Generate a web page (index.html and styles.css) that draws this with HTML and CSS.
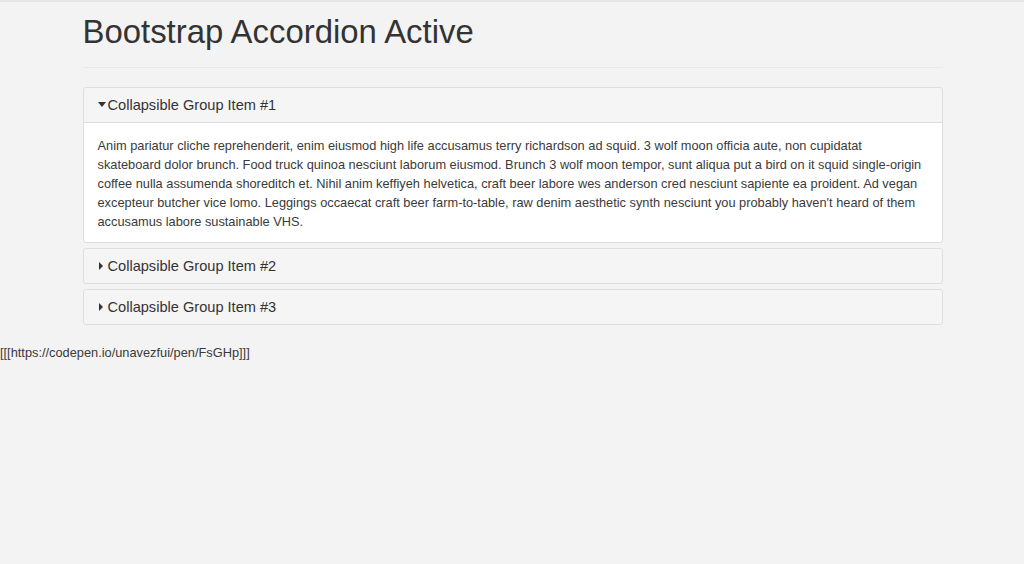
FILE: index.html
```html
<!DOCTYPE html>
<html lang="en">
<head>
<meta charset="utf-8">
<title>Bootstrap Accordion Active</title>
<link rel="stylesheet" href="styles.css">
</head>
<body>
<div class="topline"></div>
<div class="container">
  <h1 class="page-title">Bootstrap Accordion Active</h1>
  <hr class="rule">
  <div class="accordion">
    <div class="panel panel-open">
      <div class="panel-heading"><span class="caret caret-down"></span>Collapsible Group Item #1</div>
      <div class="panel-body">Anim pariatur cliche reprehenderit, enim eiusmod high life accusamus terry richardson ad squid. 3 wolf moon officia aute, non cupidatat skateboard dolor brunch. Food truck quinoa nesciunt laborum eiusmod. Brunch 3 wolf moon tempor, sunt aliqua put a bird on it squid single-origin coffee nulla assumenda shoreditch et. Nihil anim keffiyeh helvetica, craft beer labore wes anderson cred nesciunt sapiente ea proident. Ad vegan excepteur butcher vice lomo. Leggings occaecat craft beer farm-to-table, raw denim aesthetic synth nesciunt you probably haven't heard of them accusamus labore sustainable VHS.</div>
    </div>
    <div class="panel">
      <div class="panel-heading"><span class="caret caret-right"></span>Collapsible Group Item #2</div>
    </div>
    <div class="panel">
      <div class="panel-heading"><span class="caret caret-right"></span>Collapsible Group Item #3</div>
    </div>
  </div>
</div>
<p class="source">[[[https://codepen.io/unavezfui/pen/FsGHp]]]</p>
</body>
</html>
```
FILE: styles.css
```css
html, body {
  margin: 0;
  padding: 0;
}

body {
  background: #f3f3f3;
  color: #3a3a3a;
  font-family: "Liberation Sans", Arial, sans-serif;
  font-size: 12.8px;
}

.topline {
  height: 2px;
  background: #e6e6e6;
}

.container {
  width: 860px;
  margin: 0 auto;
  padding-left: 1px;
}

.page-title {
  margin: 12px 0 0;
  font-size: 32.9px;
  font-weight: 400;
  line-height: 35px;
  color: #333;
}

.rule {
  margin: 18px 0 19px;
  border: 0;
  border-top: 1px solid #e8e8e8;
}

.panel {
  border: 1px solid #dedede;
  border-radius: 3px;
  background: #f5f5f5;
  margin-bottom: 5px;
}

.panel-heading {
  display: flex;
  align-items: center;
  height: 34px;
  padding: 0 14px;
  font-size: 14.6px;
  color: #333;
}

.panel-open .panel-heading {
  border-bottom: 1px solid #dedede;
}

.caret {
  display: inline-block;
  width: 0;
  height: 0;
  margin-right: 2px;
}

.caret-down {
  margin-top: -1px;
  border-left: 4px solid transparent;
  border-right: 4px solid transparent;
  border-top: 5px solid #333;
}

.caret-right {
  margin-left: 1px;
  margin-right: 5px;
  border-top: 4px solid transparent;
  border-bottom: 4px solid transparent;
  border-left: 4px solid #333;
}

.panel-body {
  background: #fff;
  padding: 13px 14px 11px;
  line-height: 19px;
  border-radius: 0 0 3px 3px;
}

.source {
  margin: 18px 0 0;
  line-height: 19px;
}
```
